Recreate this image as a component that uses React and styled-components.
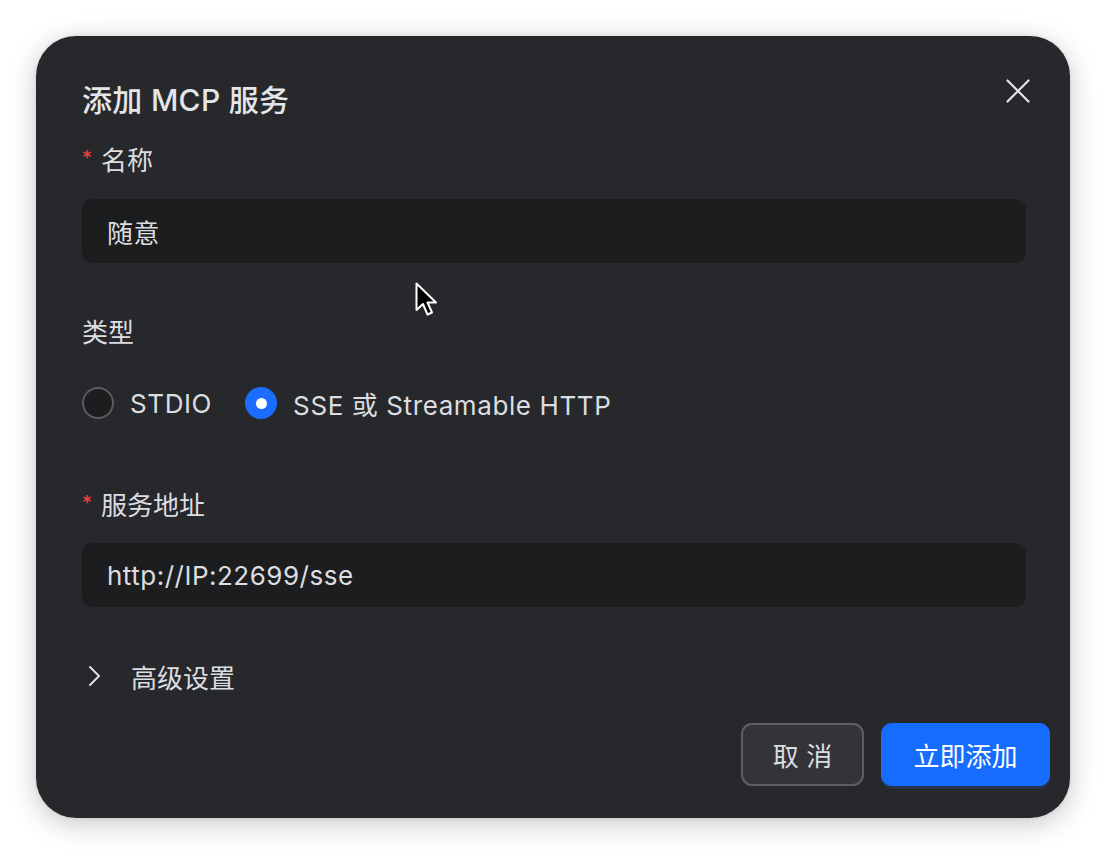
import React from "react";
import styled, { createGlobalStyle } from "styled-components";

const Global = createGlobalStyle`
  html, body { margin: 0; padding: 0; background: #ffffff; }
  body { font-family: "Inter", "Noto Sans CJK SC", sans-serif; }
  * { box-sizing: border-box; }
`;

const Page = styled.div`
  width: 1106px;
  height: 854px;
  padding: 36px;
  background: #ffffff;
`;

const Dialog = styled.div`
  position: relative;
  width: 1034px;
  height: 782px;
  background: #27282b;
  border-radius: 40px;
  box-shadow: 0 6px 28px rgba(0, 0, 0, 0.22), 0 0 4px rgba(0, 0, 0, 0.08);
  padding: 46px 20px 32px 46px;
  display: flex;
  flex-direction: column;
  color: #dfe0e3;
`;

const Title = styled.h2`
  margin: 0;
  font-size: 30px;
  line-height: 36px;
  font-weight: 500;
  letter-spacing: 0.3px;
  color: #e4e5e8;
`;

const Close = styled.button`
  position: absolute;
  top: 43px;
  right: 40px;
  width: 24px;
  height: 24px;
  padding: 0;
  border: none;
  background: none;
  color: #e4e5e8;
  display: flex;
`;

const Form = styled.div`
  display: flex;
  flex-direction: column;
  margin-right: 24px;
`;

const Label = styled.div`
  display: flex;
  align-items: center;
  font-size: 26px;
  line-height: 32px;
  color: #dcdde0;
  margin-top: ${(p) => p.$mt}px;
`;

const Star = styled.span`
  color: #f2403f;
  font-size: 20px;
  margin-right: 9px;
  position: relative;
  top: -3px;
`;

const Input = styled.div`
  height: 64px;
  margin-top: ${(p) => p.$mt}px;
  background: #1c1d1f;
  border-radius: 10px;
  padding: 0 25px;
  display: flex;
  align-items: center;
  font-size: 26px;
  letter-spacing: 0.5px;
  color: #dcdde0;
`;

const RadioRow = styled.div`
  display: flex;
  align-items: center;
  height: 32px;
  margin-top: 38px;
  gap: 33px;
`;

const RadioItem = styled.label`
  display: flex;
  align-items: center;
  gap: 16px;
  font-size: 26px;
  letter-spacing: 0.6px;
  color: #dcdde0;
`;

const RadioCircle = styled.span`
  width: 32px;
  height: 32px;
  border-radius: 50%;
  display: flex;
  align-items: center;
  justify-content: center;
  background: ${(p) => (p.$on ? "#1a6dff" : "#1c1d1f")};
  border: ${(p) => (p.$on ? "none" : "2px solid #5b5c60")};
  &::after {
    content: "";
    display: ${(p) => (p.$on ? "block" : "none")};
    width: 11px;
    height: 11px;
    border-radius: 50%;
    background: #fff;
  }
`;

const Advanced = styled.div`
  display: flex;
  align-items: center;
  margin-top: 53px;
  height: 32px;
  font-size: 26px;
  color: #dcdde0;
  gap: 30px;
  padding-left: 5px;
`;

const Footer = styled.div`
  display: flex;
  justify-content: flex-end;
  gap: 17px;
  margin-top: 31px;
`;

const Button = styled.button`
  height: 63px;
  padding: 0;
  width: ${(p) => (p.$primary ? 169 : 123)}px;
  border-radius: 11px;
  font-family: inherit;
  font-size: 26px;
  color: ${(p) => (p.$primary ? "#ffffff" : "#dcdde0")};
  background: ${(p) => (p.$primary ? "#166dfd" : "#333439")};
  border: ${(p) => (p.$primary ? "none" : "2px solid #5d5f64")};
  box-shadow: ${(p) => (p.$primary ? "0 3px 0 #2a3448" : "none")};
`;

const Cursor = styled.svg`
  position: absolute;
  left: 379px;
  top: 246px;
`;

export default function App() {
  return (
    <Page>
      <Global />
      <Dialog>
        <Title>添加 MCP 服务</Title>
        <Close aria-label="close">
          <svg width="24" height="24" viewBox="0 0 24 24" fill="none" stroke="currentColor" strokeWidth="2.2" strokeLinecap="round">
            <path d="M1.5 1.5 L22.5 22.5 M22.5 1.5 L1.5 22.5" />
          </svg>
        </Close>
        <Form>
          <Label $mt={27}><Star>*</Star>名称</Label>
          <Input $mt={22}>随意</Input>
          <Label $mt={54}>类型</Label>
          <RadioRow>
            <RadioItem><RadioCircle />STDIO</RadioItem>
            <RadioItem><RadioCircle $on />SSE 或 Streamable HTTP</RadioItem>
          </RadioRow>
          <Label $mt={71}><Star>*</Star>服务地址</Label>
          <Input $mt={21}>http://IP:22699/sse</Input>
          <Advanced>
            <svg width="14" height="22" viewBox="0 0 14 22" fill="none" stroke="#dcdde0" strokeWidth="2" strokeLinecap="round" strokeLinejoin="round">
              <path d="M3 2 L12 11 L3 20" />
            </svg>
            高级设置
          </Advanced>
        </Form>
        <Footer>
          <Button>取 消</Button>
          <Button $primary>立即添加</Button>
        </Footer>
        <Cursor width="26" height="36" viewBox="0 0 26 36">
          <path d="M1.5 1.5 L1.5 28 L8 22 L12.5 32.5 L17 30.5 L12.5 20.5 L21 20.5 Z" fill="#000" stroke="#fff" strokeWidth="2" strokeLinejoin="round" />
        </Cursor>
      </Dialog>
    </Page>
  );
}
